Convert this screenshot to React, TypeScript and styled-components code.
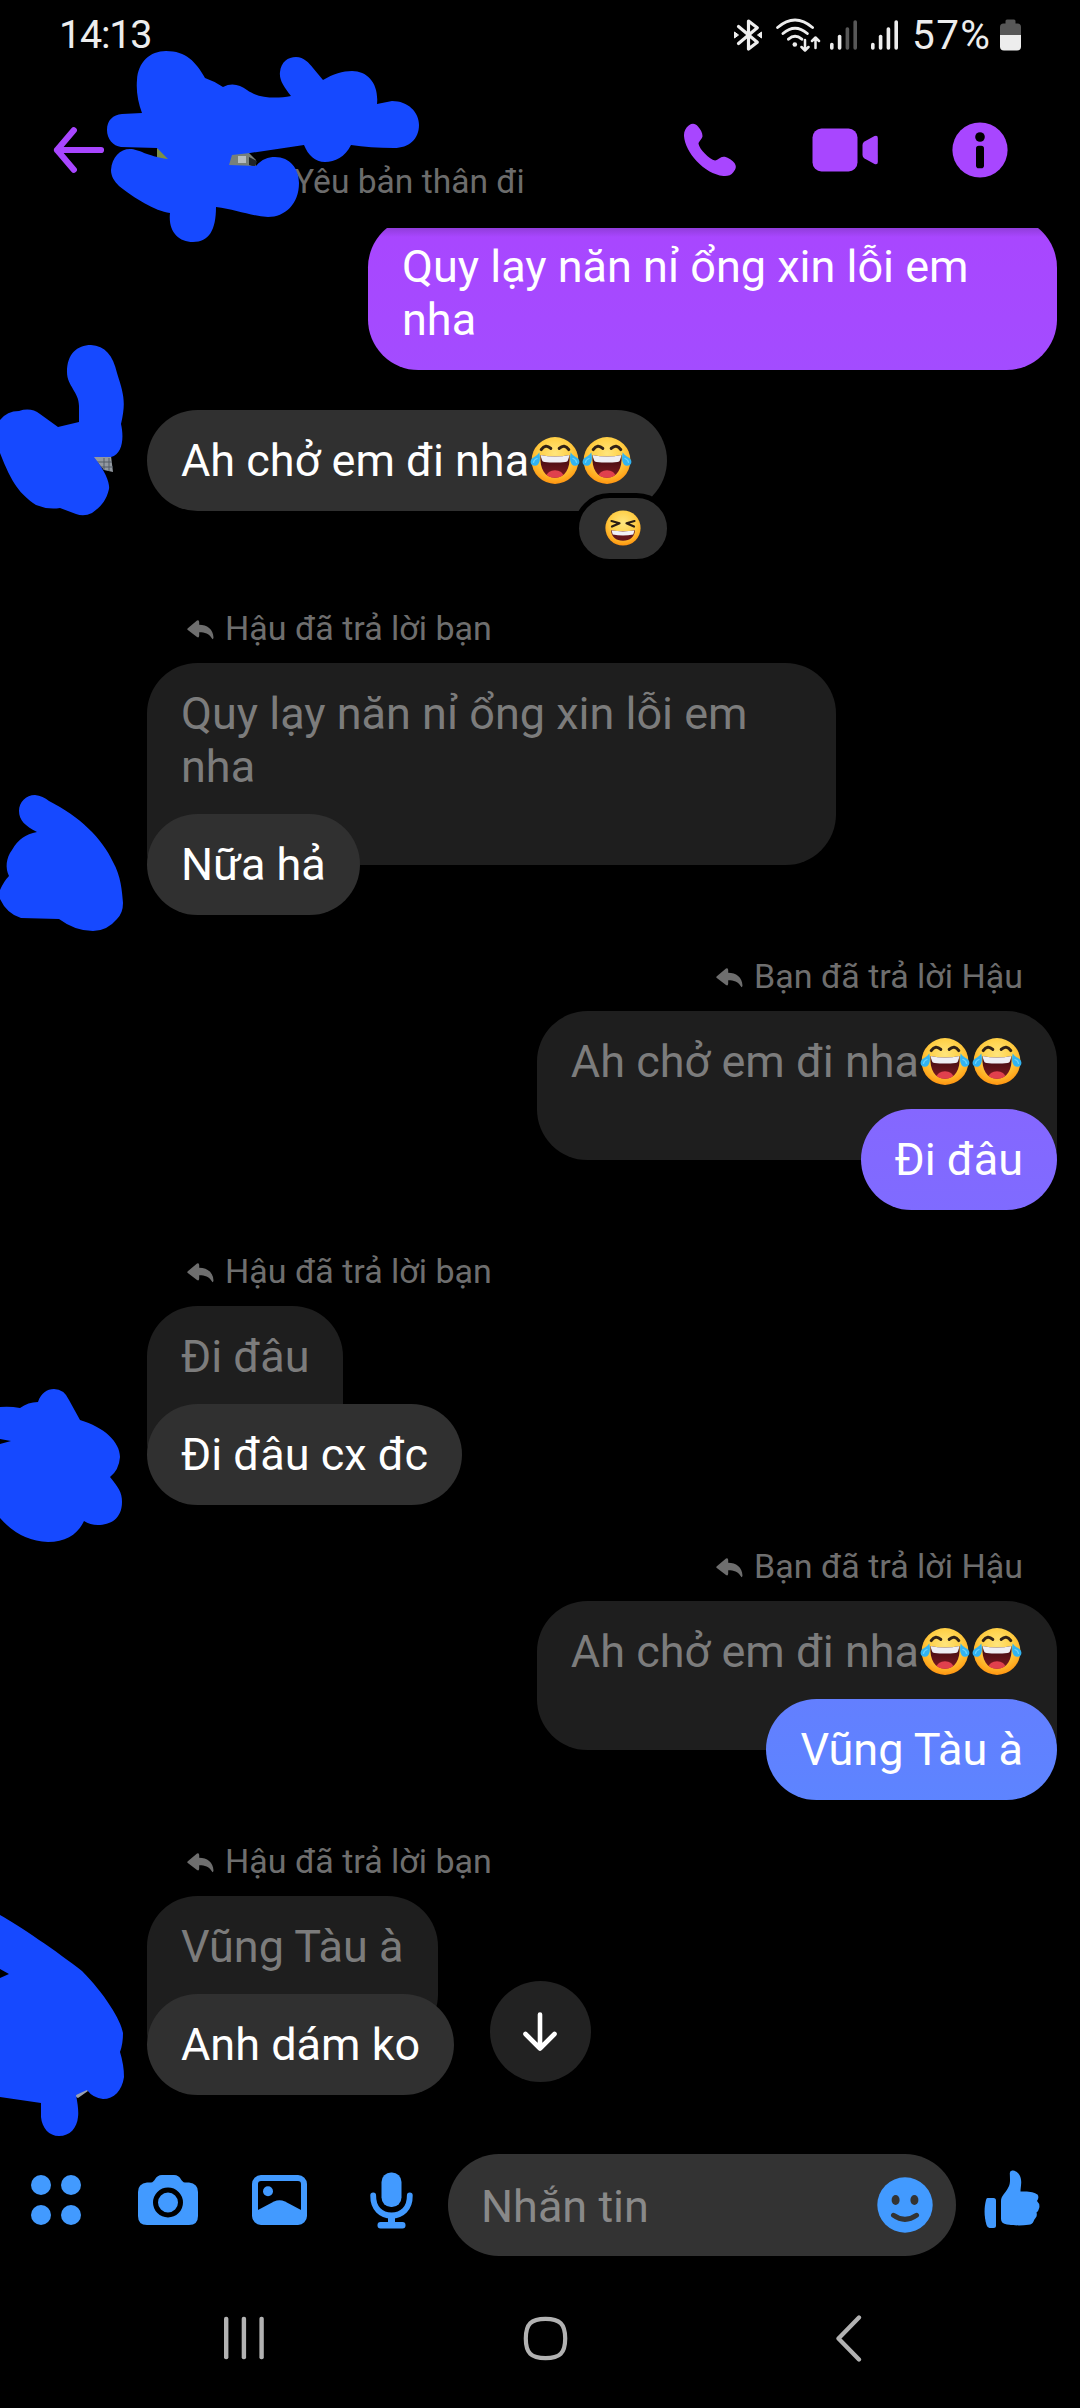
import React from "react";
import styled, { createGlobalStyle, css } from "styled-components";

const PURPLE = "#a846ff";
const BLUE = "#429aff";
const SCRIBBLE = "#1649ff";

const GlobalStyle = createGlobalStyle`
  body { margin: 0; background: #000; }
  * { box-sizing: border-box; }
  svg { display: block; flex: none; }
`;

const Screen = styled.div`
  position: relative;
  width: 1080px;
  height: 2408px;
  display: flex;
  flex-direction: column;
  overflow: hidden;
  background: #000;
  color: #fff;
  font-family: Roboto, "Noto Sans", sans-serif;
`;

const StatusBar = styled.div`
  height: 70px;
  flex: none;
  display: flex;
  align-items: center;
  justify-content: space-between;
  padding: 0 59px;
  color: #ededed;
`;

const Clock = styled.span`
  font-size: 39.5px;
  line-height: 46px;
  letter-spacing: -1.2px;
`;

const StatusIcons = styled.div`
  display: flex;
  align-items: center;
`;

const Percent = styled.span`
  width: 80px;
  margin-left: 14px;
  margin-right: 8px;
  font-size: 40.5px;
  line-height: 46px;
  letter-spacing: 1.4px;
`;

const Header = styled.header`
  height: 158px;
  flex: none;
  display: flex;
  align-items: center;
  padding: 2px 72px 0 53px;
`;

const Status = styled.span`
  margin-left: 189px;
  margin-top: 63px;
  flex: 1;
  font-size: 33.6px;
  line-height: 40px;
  color: #6c6c6c;
`;

const HeaderActions = styled.div`
  display: flex;
  align-items: center;
`;

const Thread = styled.main`
  position: relative;
  height: 1912px;
  flex: none;
  overflow: hidden;
  display: flex;
  flex-direction: column;
  padding: 0 23px 0 147px;
`;

const TopShade = styled.div`
  position: absolute;
  inset: 0 0 auto 0;
  height: 9px;
  background: linear-gradient(rgba(0, 0, 0, 0.14), rgba(0, 0, 0, 0));
`;

type Side = { $mine?: boolean };

const Group = styled.section<Side>`
  display: flex;
  flex-direction: column;
  align-items: ${(p) => (p.$mine ? "flex-end" : "flex-start")};
  margin-bottom: 40.5px;
`;

const bubbleText = css`
  font-size: 45px;
  line-height: 53px;
  max-width: 689px;
  border-radius: 50.5px;
`;

const Bubble = styled.div<{ $color?: string }>`
  ${bubbleText}
  position: relative;
  display: flex;
  align-items: center;
  min-height: 101px;
  padding: 23.5px 34px 24px;
  background: ${(p) => p.$color ?? "#303030"};
`;

const Quote = styled.div<Side>`
  ${bubbleText}
  display: flex;
  padding: 23.5px 34px 72.5px;
  margin-bottom: -51px;
  background: #1e1e1e;
  color: #7c7c7c;
  ${(p) => (p.$mine ? "border-bottom-right-radius: 12px;" : "border-bottom-left-radius: 12px;")}
`;

const FirstRow = styled(Group)`
  margin-top: -11.5px;
  margin-bottom: 40px;
`;

const ReactedRow = styled(Group)`
  margin-bottom: 96.5px;
`;

const ReplyLabel = styled.div`
  display: flex;
  align-items: center;
  gap: 11px;
  height: 40px;
  margin: 0 34px 15.5px 40px;
  font-size: 34px;
  line-height: 40px;
  color: #6e6e6e;
  svg { margin-top: 5px; }
`;

const Reaction = styled.div`
  position: absolute;
  right: -5px;
  top: 83px;
  width: 98px;
  height: 71px;
  border: 5px solid #000;
  border-radius: 36px;
  background: #303030;
  display: flex;
  align-items: center;
  justify-content: center;
  padding-bottom: 2px;
`;

const ScrollDown = styled.button`
  position: absolute;
  left: 489.5px;
  top: 1753px;
  width: 101px;
  height: 101px;
  padding: 0;
  border: 0;
  border-radius: 50%;
  background: #222;
  display: flex;
  align-items: center;
  justify-content: center;
`;

const Composer = styled.footer`
  height: 130px;
  flex: none;
  display: flex;
  align-items: flex-start;
  padding: 14px 39px 0 31px;
`;

const Tools = styled.div`
  width: 417px;
  height: 92px;
  display: flex;
  align-items: center;
`;

const Field = styled.div`
  width: 508px;
  height: 102px;
  border-radius: 51px;
  background: #333;
  display: flex;
  align-items: center;
  justify-content: space-between;
  padding: 0 23px 0 33px;
`;

const Placeholder = styled.span`
  font-size: 45px;
  line-height: 53px;
  color: #898989;
  padding-top: 3px;
`;

const LikeSlot = styled.div`
  margin-left: 28px;
  padding-top: 16px;
`;

const NavBar = styled.nav`
  height: 138px;
  flex: none;
  display: flex;
  align-items: center;
  padding: 0 218px 2px 223px;
`;

const Gap = styled.span<{ $w: number }>`
  flex: none;
  width: ${(p) => p.$w}px;
`;

const ScribbleLayer = styled.svg`
  position: absolute;
  left: 0;
  top: 0;
  pointer-events: none;
`;

const EmojiPair = styled.span`
  display: flex;
  align-items: center;
`;

const JoyEmoji = () => (
  <svg width="52" height="53" viewBox="0 0 52 53">
    <defs>
      <radialGradient id="joyFace" cx="0.5" cy="0.35" r="0.68">
        <stop offset="0" stopColor="#ffe57c" />
        <stop offset="0.5" stopColor="#ffcf45" />
        <stop offset="0.8" stopColor="#ffad22" />
        <stop offset="1" stopColor="#ff8d0c" />
      </radialGradient>
      <linearGradient id="joyMouth" x1="0" y1="0" x2="0" y2="1">
        <stop offset="0" stopColor="#3c0a0e" />
        <stop offset="1" stopColor="#7c1a22" />
      </linearGradient>
      <clipPath id="joyClip">
        <path d="M11.5 21 Q26 24 40.5 21 C41.5 35 36 43.7 26 43.7 C16 43.7 10.5 35 11.5 21Z" />
      </clipPath>
    </defs>
    <circle cx="26" cy="26.5" r="23.4" fill="url(#joyFace)" />
    <path d="M11.5 21 Q26 24 40.5 21 C41.5 35 36 43.7 26 43.7 C16 43.7 10.5 35 11.5 21Z" fill="url(#joyMouth)" />
    <g clipPath="url(#joyClip)">
      <ellipse cx="26" cy="42.5" rx="8.5" ry="6.3" fill="#e0404d" />
      <path d="M11 20 Q26 24 41 20 L39 26.3 Q38.600 27.800 36.500 28 Q26 29 15.500 28 Q13.400 27.800 13 26.300Z" fill="#eeeef4" />
    </g>
    <path d="M12.2 15.6 Q16.5 9.4 21.8 14.4 M30.2 14.4 Q35.5 9.4 39.8 15.6" fill="none" stroke="#302116" strokeWidth="3" strokeLinecap="round" />
    <path d="M10.2 18.2 C11.8 24.5 11 31.6 6 31.8 C1.6 32 0.3 27.6 3 24.6 C5 22.4 8.500 21.900 10.200 18.200Z" fill="#32b4f2" />
    <path d="M41.8 18.2 C40.200 24.500 41 31.600 46 31.800 C50.400 32 51.700 27.600 49 24.600 C47 22.400 43.500 21.900 41.800 18.200Z" fill="#32b4f2" />
    <path d="M8 24.5 Q5 25.5 4.500 28.300 M44 24.500 Q47 25.500 47.500 28.300" fill="none" stroke="#6bd3fb" strokeWidth="1.300" strokeLinecap="round" />
  </svg>
);

const LaughEmoji = () => (
  <svg width="36" height="36" viewBox="0 0 36 36">
    <defs>
      <radialGradient id="laughFace" cx="0.5" cy="0.35" r="0.68">
        <stop offset="0" stopColor="#ffe680" />
        <stop offset="0.5" stopColor="#ffd04a" />
        <stop offset="0.8" stopColor="#ffae22" />
        <stop offset="1" stopColor="#ff8a0a" />
      </radialGradient>
    </defs>
    <circle cx="18" cy="18" r="17.6" fill="url(#laughFace)" />
    <path d="M6.5 11 L14.500 13.200 L7 16.600 M29.500 11 L21.500 13.200 L29 16.600" fill="none" stroke="#2b1d14" strokeWidth="2.200" strokeLinecap="round" strokeLinejoin="round" />
    <path d="M6 20.300 Q18 22 30 20.300 C29.500 27 25 30.800 18 30.800 C11 30.800 6.500 27 6 20.300Z" fill="#64161b" />
    <path d="M6.600 20.600 Q18 22.200 29.400 20.600 L28.300 24.600 Q18 26.600 7.700 24.600Z" fill="#f1f2f6" />
  </svg>
);

const ReplyArrow = () => (
  <svg width="27" height="20" viewBox="0 0 27 20">
    <path d="M0.8 8.3 L10 0.6 Q12 -0.5 12.2 2 V4.7 C20 4.8 26.2 9 26.5 17.5 Q26 20.5 24.6 18 C22 13.6 18 12.2 12.2 12.2 V15.5 Q12 18.3 10 17 L0.8 10 Q-0.2 9.1 0.8 8.3Z" fill="#6e6e6e" />
  </svg>
);

const Signal = ({ level }: { level: number }) => (
  <svg width="27" height="30" viewBox="0 0 27 30">
    {[7, 15, 22.5, 29.5].map((h, i) => (
      <rect key={h} x={i * 7.8} y={29.8 - h} width="3.6" height={h} rx="1.7" fill={i < level ? "#ededed" : "#575757"} />
    ))}
  </svg>
);

const StatusGlyphs = () => (
  <>
    <svg width="28" height="34" viewBox="0 0 28 34">
      <path d="M4.5 8.5 L23.3 24.3 L14.5 31 V3 L23.3 9.7 L4.5 25.5" fill="none" stroke="#ededed" strokeWidth="3.2" strokeLinejoin="round" strokeLinecap="round" />
      <path d="M0.5 14 L4.5 17 L0.5 20Z M27.5 14 L23.5 17 L27.5 20Z" fill="#ededed" stroke="#ededed" strokeLinejoin="round" />
    </svg>
    <Gap $w={14} />
    <svg width="45" height="34" viewBox="0 0 45 34">
      <g fill="none" stroke="#ededed" strokeLinecap="round">
        <path d="M1.6 9.5 Q19 -5.5 36.5 9.5 M7 15.5 Q19 5 31.3 15.5 M12.5 21.2 Q19 15.5 25.8 21.2" strokeWidth="2.9" />
        <path d="M29 22 V32 M25.5 29 L29 32.5 L32.5 29 M39.5 30 V20 M36 23 L39.5 19.5 L43 23" strokeWidth="2.5" strokeLinejoin="round" />
      </g>
      <circle cx="18.8" cy="26.5" r="2.3" fill="#ededed" />
    </svg>
    <Gap $w={9} />
    <Signal level={2} />
    <Gap $w={14} />
    <Signal level={4} />
  </>
);

const Battery = () => (
  <svg width="21" height="32" viewBox="0 0 21 32">
    <path d="M7 0.500 H14 Q15.500 0.500 15.500 2 V4.500 H17.500 Q21 4.500 21 8 V16.500 H0 V8 Q0 4.500 3.500 4.500 H5.500 V2 Q5.500 0.500 7 0.500Z" fill="#575757" />
    <path d="M0 16 H21 V27.500 Q21 31.500 17 31.500 H4 Q0 31.500 0 27.500Z" fill="#ededed" />
  </svg>
);

const BackArrow = () => (
  <svg width="52" height="46" viewBox="0 0 52 46">
    <path d="M48 23 H4 M20.800 3.300 L4 23 L20.800 42.700" fill="none" stroke={PURPLE} strokeWidth="6.200" strokeLinecap="round" strokeLinejoin="round" />
  </svg>
);

const PhoneIcon = () => (
  <svg width="54" height="54" viewBox="0 0 54 54">
    <path d="M6 2.200 C9.500 -0.200 12.500 0.500 15 3.500 C17.500 6.500 19.500 9.500 19.500 13 C19.500 16 15.500 18.200 15.500 20.800 C16.500 26.500 26.500 36.500 32 37.500 C35 37.500 37 33.800 40.500 33.800 C44 33.800 48 36.500 51 39.500 C53.500 42.500 53.500 45.500 50.500 49 C48 52.500 44.500 53.300 40.500 53 C21 51 2 29 1 13 C0.800 8.500 2.500 4.800 6 2.200Z" fill={PURPLE} />
  </svg>
);

const VideoIcon = () => (
  <svg width="67" height="44" viewBox="0 0 67 44">
    <rect x="0.5" y="0.5" width="45" height="43" rx="9" fill={PURPLE} />
    <path d="M50.500 17 Q50.500 14.800 52.500 13.600 L62.500 8 Q65.800 6.800 65.800 10 V34 Q65.800 37.200 62.500 36 L52.500 30.400 Q50.500 29.200 50.500 27Z" fill={PURPLE} />
  </svg>
);

const InfoIcon = () => (
  <svg width="56" height="56" viewBox="0 0 56 56">
    <circle cx="28" cy="28" r="27.6" fill={PURPLE} />
    <circle cx="28" cy="15" r="4.8" fill="#000" />
    <rect x="24" y="23.8" width="8" height="22.4" rx="2.8" fill="#000" />
  </svg>
);

const DotsIcon = () => (
  <svg width="50" height="50" viewBox="0 0 50 50" fill={BLUE}>
    <circle cx="10" cy="10" r="10" />
    <circle cx="40" cy="10" r="10" />
    <circle cx="10" cy="40" r="10" />
    <circle cx="40" cy="40" r="10" />
  </svg>
);

const CameraIcon = () => (
  <svg width="60" height="50" viewBox="0 0 60 50">
    <path d="M9 7.500 H13 C17 7.500 17 0 24 0 H36 C43 0 43 7.500 47 7.500 H51 Q60 8.500 60 17 V41 Q60 50 51 50 H9 Q0 50 0 41 V17 Q0 8.500 9 7.500Z" fill={BLUE} />
    <circle cx="30" cy="27.5" r="12.5" fill={BLUE} stroke="#000" strokeWidth="5" />
  </svg>
);

const PhotoIcon = () => (
  <svg width="55" height="50" viewBox="0 0 55 50">
    <rect x="3" y="3" width="49" height="44" rx="6" fill="none" stroke={BLUE} strokeWidth="6" />
    <circle cx="16" cy="16.2" r="5" fill={BLUE} />
    <path d="M5 35.500 L22 26.500 Q27.500 23.800 33 26.500 L50 35.500 V46 H5Z" fill={BLUE} />
  </svg>
);

const MicIcon = () => (
  <svg width="43" height="57" viewBox="0 0 43 57">
    <rect x="11.5" y="0.5" width="20" height="34.5" rx="9.5" fill={BLUE} />
    <path d="M3.200 23.500 C3 36.500 11 43.500 21.500 43.500 C32 43.500 40 36.500 39.800 23.500" fill="none" stroke={BLUE} strokeWidth="5.800" strokeLinecap="round" />
    <path d="M21.500 43 V53" stroke={BLUE} strokeWidth="7" />
    <rect x="7.5" y="50" width="28" height="6.5" rx="3" fill={BLUE} />
  </svg>
);

const SmileIcon = () => (
  <svg width="56" height="56" viewBox="0 0 56 56">
    <circle cx="28" cy="28" r="27.7" fill={BLUE} />
    <ellipse cx="18.6" cy="23" rx="4" ry="5" fill="#333" />
    <ellipse cx="37.4" cy="23" rx="4" ry="5" fill="#333" />
    <path d="M16.500 38.300 Q28 46.500 39.500 38.300" fill="none" stroke="#333" strokeWidth="5" strokeLinecap="round" />
  </svg>
);

const LikeIcon = () => (
  <svg width="56" height="59" viewBox="0 0 56 59">
    <path d="M3.500 28 H9.500 Q12 28 12 30.500 V55.500 Q12 58 9.500 58 H5.500 Q3.500 58 2.500 55 C0 46 0 38 2 30 Q2.500 28 3.500 28Z" fill={BLUE} />
    <path d="M25.800 3 Q26 0 29 0.500 C35.500 1.500 37.500 8 37.200 13 C37 16.500 36.500 19 36.500 21.500 H41 C46 21.500 51 22.800 53.500 24.500 Q55.500 27.500 53 31 Q56.500 34.500 55 38.500 Q54.500 41 52.500 42.500 Q53.500 46 51.500 48 Q50 49.500 49.500 51.500 Q48.500 54.300 44.500 54.800 C37 55.800 29 55.500 23 54.500 Q17 53.500 17 49 V31 C17 26 21.500 23 24 18 C27 13 25.800 8 25.800 3Z" fill={BLUE} />
  </svg>
);

const DownArrow = () => (
  <svg width="36" height="40" viewBox="0 0 36 40">
    <path d="M18 2.500 V36.500 M3.500 22 L18 36.500 L32.500 22" fill="none" stroke="#fff" strokeWidth="4.600" strokeLinecap="round" strokeLinejoin="round" />
  </svg>
);

const RecentsIcon = () => (
  <svg width="42" height="44" viewBox="0 0 42 44" fill="#b2b2b2">
    <rect x="1" y="0.8" width="4.4" height="42.5" rx="2" />
    <rect x="18.7" y="0.8" width="4.4" height="42.5" rx="2" />
    <rect x="36.4" y="0.8" width="4.4" height="42.5" rx="2" />
  </svg>
);

const HomeIcon = () => (
  <svg width="45" height="45" viewBox="0 0 45 45">
    <path d="M22.500 2.800 C37 2.800 42.200 8 42.200 22.500 C42.200 37 37 42.200 22.500 42.200 C8 42.200 2.800 37 2.800 22.500 C2.800 8 8 2.800 22.500 2.800Z" fill="none" stroke="#b2b2b2" strokeWidth="4.200" />
  </svg>
);

const NavBackIcon = () => (
  <svg width="27" height="47" viewBox="0 0 27 47">
    <path d="M24 2.500 L3.500 23.500 L24 44.500" fill="none" stroke="#b2b2b2" strokeWidth="4.300" strokeLinecap="round" strokeLinejoin="round" />
  </svg>
);

/* Freehand marker strokes covering the avatars and the contact name */
const Scribbles = () => (
  <ScribbleLayer width="1080" height="2408" viewBox="0 0 1080 2408">
    <path d="M157 148 L166 153 L170 161 L157 158Z" fill="#7c8f45" />
    <path d="M228 153 H249 L256 160 V166 H228Z" fill="#77807a" />
    <path d="M238 156 H246 V163 H238Z" fill="#b5bcc0" />
    <path d="M249 157 L257 161 L255 167 L249 165Z" fill="#202528" />
    <path d="M92 456 H111 L113 472 L104 470Z" fill="#9298a0" />
    <path d="M95 462 H112 M98 467 H113 M104 458 V470 M109 458 V471" stroke="#555c66" strokeWidth="1" />
    <path d="M74 2096 L86 2087 L88 2091 L78 2098Z" fill="#9ba1b0" />
    <g fill={SCRIBBLE}>
      <path d="M107 130 C107 120 113 115 122 114 L142 113 C138 102 136 91 137 80 C138 62 150 51 166 51 C186 51 196 62 205 78 Q214 81 223 87 C232 82 240 85 247 90 C258 98 275 99 291 96 C284 87 279 80 280 72 C281 62 288 57 296 57 C304 57 309 63 313 68 L323 80 C333 74 343 71 352 71 C368 71 379 84 377 104 L392 101 C408 101 419 112 419 125 C419 139 409 148 394 148 Q370 148 351 145 C345 157 335 162 325 162 C315 162 308 155 304 145 L250 153 L232 155 L229 165 L256 166 C262 159 268 157 275 157 C290 157 299 169 299 183 C299 204 285 217 268 217 C250 216 235 209 216 207 C216 230 209 242 193 242 C178 242 168 231 170 213 C155 211 134 198 119 186 C114 181 111 176 111 170 C112 157 120 149 130 149 C139 149 146 156 168 159 L157 148 L121 147 C113 146 107 139 107 130Z" />
      <path d="M67 372 C67 354 77 345 91 345 C105 346 113 355 117 373 C124 395 126 402 121 424 C124 437 123 454 111 457 L94 457 C106 472 110 484 109 489 C106 502 100 507 92 513 Q84 517 76 514 L60 508 Q48 510 36 505 C20 494 12 484 0 453 V420 Q7 411 19 411 Q31 407 40 414 L58 427 L79 422 V406 C79 392 67 386 67 372Z" />
      <path d="M19 811 C19 802 26 795 35 795 Q43 796 49 801 C79 816 102 838 113 862 C121 876 122 891 123 903 Q123 913 117 919 Q107 931 93 931 Q75 931 59 919 L21 918 Q7 914 0 899 V890 Q4 881 9 876 C5 868 6 858 12 850 Q20 835 37 832 C25 826 19 820 19 811Z" />
      <path d="M0 1407 Q10 1406 20 1408 Q28 1402 38 1402 C41 1393 47 1389 54 1389 Q64 1389 69 1400 L80 1420 C104 1427 120 1442 120 1457 Q119 1470 110 1477 C118 1487 122 1492 122 1502 C122 1519 110 1525 98 1525 Q90 1525 84 1521 C78 1534 66 1542 48 1542 Q20 1541 0 1518 V1444 L11 1441 L0 1439Z" />
      <path d="M0 1915 C18 1925 58 1952 82 1971 C104 1993 121 2020 123 2033 Q123 2044 120 2052 Q124 2065 124 2077 C122 2091 114 2099 103 2099 Q93 2098 87 2090 L76 2095 Q79 2110 78 2117 C77 2128 70 2136 59 2136 C49 2136 42 2128 41 2117 V2103 L0 2097 V1978 L9 1974 L0 1969Z" />
    </g>
  </ScribbleLayer>
);

const LONG_TEXT = "Quy lạy năn nỉ ổng xin lỗi em nha";

const Laughing = () => (
  <>
    Ah chở em đi nha
    <EmojiPair>
      <JoyEmoji />
      <JoyEmoji />
    </EmojiPair>
  </>
);

type ReplyProps = {
  mine?: boolean;
  label: string;
  quote: React.ReactNode;
  text: string;
  color?: string;
};

const Reply = ({ mine, label, quote, text, color }: ReplyProps) => (
  <Group $mine={mine}>
    <ReplyLabel>
      <ReplyArrow />
      {label}
    </ReplyLabel>
    <Quote $mine={mine}>{quote}</Quote>
    <Bubble $color={color}>{text}</Bubble>
  </Group>
);

export default function App() {
  return (
    <Screen>
      <GlobalStyle />
      <StatusBar>
        <Clock>14:13</Clock>
        <StatusIcons>
          <StatusGlyphs />
          <Percent>57%</Percent>
          <Battery />
        </StatusIcons>
      </StatusBar>

      <Header>
        <BackArrow />
        <Status>Yêu bản thân đi</Status>
        <HeaderActions>
          <PhoneIcon />
          <Gap $w={75} />
          <VideoIcon />
          <Gap $w={73} />
          <InfoIcon />
        </HeaderActions>
      </Header>

      <Thread>
        <FirstRow $mine>
          <Bubble $color="linear-gradient(#a946ff, #a34cff)">{LONG_TEXT}</Bubble>
        </FirstRow>
        <ReactedRow>
          <Bubble>
            <Laughing />
            <Reaction>
              <LaughEmoji />
            </Reaction>
          </Bubble>
        </ReactedRow>
        <Reply label="Hậu đã trả lời bạn" quote={LONG_TEXT} text="Nữa hả" />
        <Reply mine label="Bạn đã trả lời Hậu" quote={<Laughing />} text="Đi đâu" color="linear-gradient(#8567ff, #7f6bff)" />
        <Reply label="Hậu đã trả lời bạn" quote="Đi đâu" text="Đi đâu cx đc" />
        <Reply mine label="Bạn đã trả lời Hậu" quote={<Laughing />} text="Vũng Tàu à" color="linear-gradient(#637fff, #5d84ff)" />
        <Reply label="Hậu đã trả lời bạn" quote="Vũng Tàu à" text="Anh dám ko" />
        <TopShade />
        <ScrollDown>
          <DownArrow />
        </ScrollDown>
      </Thread>

      <Composer>
        <Tools>
          <DotsIcon />
          <Gap $w={57} />
          <CameraIcon />
          <Gap $w={54} />
          <PhotoIcon />
          <Gap $w={63} />
          <MicIcon />
        </Tools>
        <Field>
          <Placeholder>Nhắn tin</Placeholder>
          <SmileIcon />
        </Field>
        <LikeSlot>
          <LikeIcon />
        </LikeSlot>
      </Composer>

      <NavBar>
        <RecentsIcon />
        <Gap $w={258} />
        <HomeIcon />
        <Gap $w={267} />
        <NavBackIcon />
      </NavBar>
      <Scribbles />
    </Screen>
  );
}
